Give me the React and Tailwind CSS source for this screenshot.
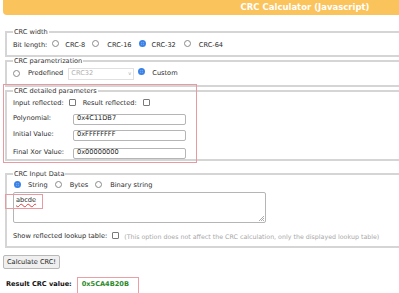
const Radio = ({ on }) =>
  on ? (
    <span className="inline-block h-[7px] w-[7px] shrink-0 rounded-full border-[2px] border-[#3b82e6] bg-white">
      <span className="block h-full w-full rounded-full bg-[#3b82e6]" />
    </span>
  ) : (
    <span className="inline-block h-[7px] w-[7px] shrink-0 rounded-full border border-[#8a8a8a] bg-white" />
  );

const Check = () => <span className="inline-block h-[7px] w-[7px] shrink-0 rounded-[1px] border border-[#7a7a7a] bg-white" />;

const Field = ({ legend, children, className = '' }) => (
  <fieldset className={'ml-[5px] w-[620px] border-2 border-[#d5d5d5] px-[6px] ' + className}>
    <legend className="px-[1px] leading-[8px] text-[#333]">{legend}</legend>
    {children}
  </fieldset>
);

const params = [
  ['Polynomial:', '0x4C11DB7', 'mt-[4px]'],
  ['Initial Value:', '0xFFFFFFFF', 'mt-[5px]'],
  ['Final Xor Value:', '0x00000000', 'mt-[7px]'],
];

export default function App() {
  return (
    <div className="relative h-[293px] w-[399px] overflow-hidden bg-white font-['DejaVu_Sans',sans-serif] text-[6.6px] text-[#2b2b2b]">
      <div className="ml-[3px] h-[15px] w-[604px] rounded-bl-[4px] bg-[#fbc35c] text-center text-[8.5px] font-bold leading-[15px] text-white">
        CRC Calculator (Javascript)
      </div>

      <Field legend="CRC width" className="mt-[13px] pb-[4px] pt-[4px]">
        <div className="flex items-center">
          <span>Bit length:</span>
          <span className="ml-[5px]"><Radio /></span>
          <span className="ml-[6px]">CRC-8</span>
          <span className="ml-[7px]"><Radio /></span>
          <span className="ml-[8px]">CRC-16</span>
          <span className="ml-[7px]"><Radio on /></span>
          <span className="ml-[6px]">CRC-32</span>
          <span className="ml-[8px]"><Radio /></span>
          <span className="ml-[8px]">CRC-64</span>
        </div>
      </Field>

      <Field legend="CRC parametrization" className="pb-[5px] pt-[3px]">
        <div className="flex items-center">
          <Radio />
          <span className="ml-[8px]">Predefined</span>
          <span className="ml-[5px] flex h-[12px] w-[66px] items-center justify-between border border-[#e0e0e0] px-[2px] text-[#b0b0b0]">
            CRC32
            <span className="text-[5px]">v</span>
          </span>
          <span className="ml-[4px]"><Radio on /></span>
          <span className="ml-[7px]">Custom</span>
        </div>
      </Field>

      <Field legend="CRC detailed parameters" className="pb-0 pt-[4px]">
        <div className="flex items-center">
          <span>Input reflected:</span>
          <span className="ml-[5px]"><Check /></span>
          <span className="ml-[7px]">Result reflected:</span>
          <span className="ml-[6px]"><Check /></span>
        </div>
        {params.map(([l, v, m]) => (
          <div key={l} className={'flex items-center ' + m}>
            <span className="w-[60px]">{l}</span>
            <span className="flex h-[11px] w-[113px] items-center rounded-[2px] border border-[#b5b5b5] bg-white px-[3px] text-[#222]">{v}</span>
          </div>
        ))}
      </Field>

      <Field legend="CRC Input Data" className="mt-[9px] pb-[3px] pt-[3px]">
        <div className="flex items-center">
          <span className="ml-[1px]"><Radio on /></span>
          <span className="ml-[7px]">String</span>
          <span className="ml-[7px]"><Radio /></span>
          <span className="ml-[8px]">Bytes</span>
          <span className="ml-[7px]"><Radio /></span>
          <span className="ml-[8px]">Binary string</span>
        </div>
        <div className="relative h-[31px] w-[253px] rounded-[2px] border border-[#b5b5b5] bg-white px-[2px] pt-[3px]">
          <span className="underline decoration-[#e04040] decoration-wavy decoration-[0.5px] underline-offset-[1px]">abcde</span>
          <svg className="absolute bottom-[1px] right-[1px]" width="5" height="5" viewBox="0 0 5 5">
            <path d="M5 0 L0 5 M5 2 L2 5 M5 4 L4 5" stroke="#888" strokeWidth="0.7" />
          </svg>
        </div>
        <div className="mt-[9px] flex items-center">
          <span>Show reflected lookup table:</span>
          <span className="ml-[5px]"><Check /></span>
          <span className="ml-[5px] text-[6.3px] text-[#a8a8a8]">(This option does not affect the CRC calculation, only the displayed lookup table)</span>
        </div>
      </Field>

      <button className="ml-[3px] mt-[7px] block h-[14px] rounded-[2px] border border-[#b8b8b8] bg-[#efefef] px-[3px] leading-[12px] text-[#222]">
        Calculate CRC!
      </button>

      <div className="mt-[8px] flex items-center">
        <span className="ml-[6px] font-bold text-[#111]">Result CRC value:</span>
        <span className="ml-[5px] flex h-[17px] w-[62px] items-center border border-[#e8a0a4] px-[4px] font-bold text-[#2a8a2a]">0x5CA4B20B</span>
      </div>

      <div className="absolute left-[3px] top-[84px] h-[79px] w-[194px] border border-[#e79a9f]" />
      <div className="absolute left-[5px] top-[194px] h-[15px] w-[38px] border border-[#e79a9f]" />
    </div>
  );
}
